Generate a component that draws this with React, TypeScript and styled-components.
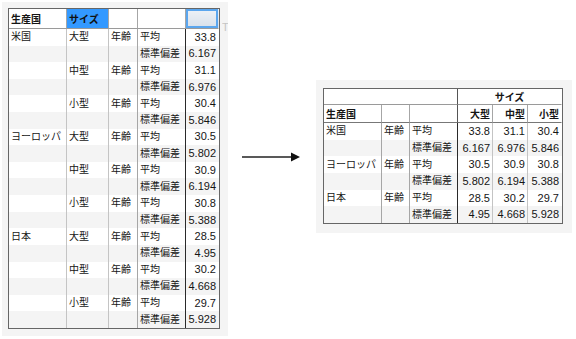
import React from 'react';
import styled, { createGlobalStyle } from 'styled-components';

const GlobalStyle = createGlobalStyle`
    html, body {
        margin: 0;
        padding: 0;
        background: #fff;
    }
    body {
        font-family: "Liberation Sans", "Noto Sans CJK JP", sans-serif;
        color: #151515;
    }
`;

const Page = styled.div`
    display: flex;
    align-items: flex-start;
    width: 576px;
    height: 339px;
    padding: 2px;
    box-sizing: border-box;
`;

const Panel = styled.div<{ $w: number; $h: number; $top?: number; $pad: string }>`
    display: flex;
    align-items: flex-start;
    flex: none;
    width: ${p => p.$w}px;
    height: ${p => p.$h}px;
    margin-top: ${p => p.$top ?? 0}px;
    padding: ${p => p.$pad};
    box-sizing: border-box;
    background: #f4f4f4;
`;

const Grid = styled.div<{ $cols: string; $rows: string }>`
    display: grid;
    flex: none;
    grid-template-columns: ${p => p.$cols};
    grid-template-rows: ${p => p.$rows};
    border: 1px solid #666;
    background: #fff;
`;

const Cell = styled.div<{ $alt?: boolean; $right?: boolean; $line?: string; $jp?: boolean }>`
    box-sizing: border-box;
    display: flex;
    align-items: center;
    justify-content: ${p => (p.$right ? 'flex-end' : 'flex-start')};
    padding: 0 2px 0 2px;
    font-size: ${p => (p.$jp ? '10px' : '11px')};
    line-height: 1;
    white-space: nowrap;
    overflow: hidden;
    background: ${p => (p.$alt ? '#f4f4f4' : '#fff')};
    border-right: 1px solid ${p => p.$line ?? 'transparent'};
`;

const HeadCell = styled.div<{ $span?: number; $right?: boolean; $center?: boolean; $line?: string; $bottom?: string }>`
    box-sizing: border-box;
    display: flex;
    align-items: center;
    justify-content: ${p => (p.$center ? 'center' : p.$right ? 'flex-end' : 'flex-start')};
    grid-column: span ${p => p.$span ?? 1};
    padding: 0 2px;
    font-size: 10px;
    font-weight: bold;
    white-space: nowrap;
    background: #fff;
    border-right: 1px solid ${p => p.$line ?? 'transparent'};
    border-bottom: 1px solid ${p => p.$bottom ?? '#9a9a9a'};
`;

const ColumnHead = styled(HeadCell)`
    background: #3399ff;
    color: #111;
`;

const SelectedHead = styled(HeadCell)`
    background: linear-gradient(#eef2f7, #d8e0ea);
    box-shadow: inset 0 0 0 2px #5ba6ee;
`;

const Stub = styled.span`
    display: block;
    width: 6px;
    margin: 14px 0 0 2px;
    overflow: hidden;
    font-size: 11px;
    line-height: 11px;
    color: #c4c4c4;
`;

const ArrowBox = styled.div`
    flex: none;
    width: 88px;
    margin-top: 150px;
    padding-left: 14px;
    box-sizing: border-box;
    line-height: 0;
`;

type Size = { name: string; mean: string; sd: string };
type Country = { name: string; sizes: Size[] };

const data: Country[] = [
    {
        name: '米国',
        sizes: [
            { name: '大型', mean: '33.8', sd: '6.167' },
            { name: '中型', mean: '31.1', sd: '6.976' },
            { name: '小型', mean: '30.4', sd: '5.846' },
        ],
    },
    {
        name: 'ヨーロッパ',
        sizes: [
            { name: '大型', mean: '30.5', sd: '5.802' },
            { name: '中型', mean: '30.9', sd: '6.194' },
            { name: '小型', mean: '30.8', sd: '5.388' },
        ],
    },
    {
        name: '日本',
        sizes: [
            { name: '大型', mean: '28.5', sd: '4.95' },
            { name: '中型', mean: '30.2', sd: '4.668' },
            { name: '小型', mean: '29.7', sd: '5.928' },
        ],
    },
];

const LIGHT = '#c4c4c4';
const MID = '#a6a6a6';
const DARK = '#2a2a2a';

const LongTable = () => (
    <Grid $cols="58px 42px 29px 48px 33px" $rows="20px repeat(18, 16.61px)">
        <HeadCell $line={MID}>生産国</HeadCell>
        <ColumnHead $line={MID}>サイズ</ColumnHead>
        <HeadCell $line={MID} />
        <HeadCell $line={MID} />
        <SelectedHead />
        {data.map(country =>
            country.sizes.map((size, i) => (
                <React.Fragment key={country.name + size.name}>
                    <Cell $jp $line={LIGHT}>{i === 0 ? country.name : ''}</Cell>
                    <Cell $jp $line={LIGHT}>{size.name}</Cell>
                    <Cell $jp $line={MID}>年齢</Cell>
                    <Cell $jp $line={DARK}>平均</Cell>
                    <Cell $right>{size.mean}</Cell>
                    <Cell $alt $line={LIGHT} />
                    <Cell $alt $line={LIGHT} />
                    <Cell $alt $line={MID} />
                    <Cell $alt $jp $line={DARK}>標準偏差</Cell>
                    <Cell $alt $right>{size.sd}</Cell>
                </React.Fragment>
            ))
        )}
    </Grid>
);

const WideTable = () => (
    <Grid $cols="58px 28px 48px 35px 35px 34px" $rows="16px 18px repeat(6, 16.7px)">
        <HeadCell $span={3} $line="#555" />
        <HeadCell $span={3} $center>サイズ</HeadCell>
        <HeadCell $line={MID} $bottom="#777">生産国</HeadCell>
        <HeadCell $line={MID} $bottom="#777" />
        <HeadCell $line="#555" $bottom="#777" />
        {data[0].sizes.map((size, i) => (
            <HeadCell key={size.name} $right $line={i < 2 ? MID : undefined} $bottom="#777">
                {size.name}
            </HeadCell>
        ))}
        {data.map(country => (
            <React.Fragment key={country.name}>
                <Cell $jp $line={MID}>{country.name}</Cell>
                <Cell $jp $line={MID}>年齢</Cell>
                <Cell $jp $line={DARK}>平均</Cell>
                {country.sizes.map((size, i) => (
                    <Cell key={size.name} $right $line={i < 2 ? LIGHT : undefined}>
                        {size.mean}
                    </Cell>
                ))}
                <Cell $alt $line={MID} />
                <Cell $alt $line={MID} />
                <Cell $alt $jp $line={DARK}>標準偏差</Cell>
                {country.sizes.map((size, i) => (
                    <Cell key={size.name} $alt $right $line={i < 2 ? LIGHT : undefined}>
                        {size.sd}
                    </Cell>
                ))}
            </React.Fragment>
        ))}
    </Grid>
);

export default function App() {
    return (
        <>
            <GlobalStyle />
            <Page>
                <Panel $w={226} $h={334} $pad="6px 0 0 6px">
                    <LongTable />
                    <Stub>T</Stub>
                </Panel>
                <ArrowBox>
                    <svg width="58" height="10" viewBox="0 0 58 10">
                        <line x1="0" y1="5" x2="50" y2="5" stroke="#222" strokeWidth="1.4" />
                        <polygon points="49,0.5 58,5 49,9.5" fill="#111" />
                    </svg>
                </ArrowBox>
                <Panel $w={256} $h={153} $top={78} $pad="8px 0 0 7px">
                    <WideTable />
                </Panel>
            </Page>
        </>
    );
}
